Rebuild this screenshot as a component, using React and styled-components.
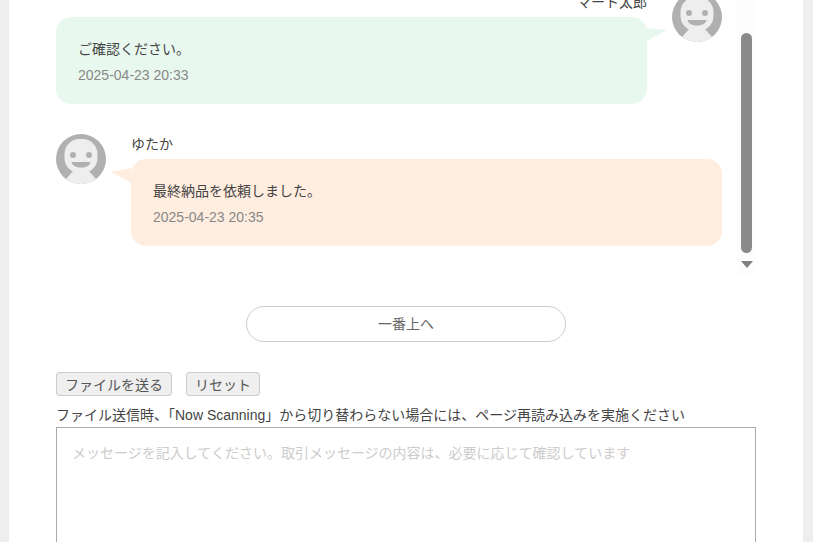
import React from "react";
import styled, { createGlobalStyle } from "styled-components";

const GlobalStyle = createGlobalStyle`
  html, body {
    margin: 0;
    height: 542px;
    overflow: hidden;
    background: #eeeeee;
  }
  * {
    box-sizing: border-box;
  }
`;

function Avatar() {
  return (
    <AvatarIcon viewBox="0 0 50 50">
      <circle cx="25" cy="25" r="25" fill="#b0b0b0" />
      <path d="M18 36 L10 45 A25 25 0 0 0 40 45 L32 36 Z" fill="#eeeeee" />
      <rect x="8.5" y="5" width="33" height="34" rx="15" fill="#eeeeee" />
      <circle cx="17" cy="21" r="3" fill="#b0b0b0" />
      <circle cx="33" cy="21" r="3" fill="#b0b0b0" />
      <path d="M15.5 28 H34.5 C33.5 32 30 33.5 25 33.5 C20 33.5 16.5 32 15.5 28 Z" fill="#b0b0b0" />
    </AvatarIcon>
  );
}

function Message({ name, text, time, mine }) {
  return (
    <MessageRow $mine={mine}>
      <Avatar />
      <MessageBody>
        <SenderName $mine={mine}>{name}</SenderName>
        <Bubble $mine={mine}>
          <MessageText>{text}</MessageText>
          <MessageTime>{time}</MessageTime>
        </Bubble>
      </MessageBody>
    </MessageRow>
  );
}

export default function App() {
  return (
    <>
      <GlobalStyle />
      <Page>
        <ChatFrame>
          <ChatList>
            <Message mine name="マート太郎" text="ご確認ください。" time="2025-04-23 20:33" />
            <Message name="ゆたか" text="最終納品を依頼しました。" time="2025-04-23 20:35" />
          </ChatList>
          <ScrollTrack>
            <ScrollThumb />
            <ScrollArrow />
          </ScrollTrack>
        </ChatFrame>
        <TopRow>
          <TopButton type="button">一番上へ</TopButton>
        </TopRow>
        <FileRow>
          <FileButton type="button">ファイルを送る</FileButton>
          <FileButton type="button">リセット</FileButton>
        </FileRow>
        <Notice>ファイル送信時、「Now Scanning」から切り替わらない場合には、ページ再読み込みを実施ください</Notice>
        <MessageInput placeholder="メッセージを記入してください。取引メッセージの内容は、必要に応じて確認しています" />
      </Page>
    </>
  );
}

const Page = styled.div`
  width: 794px;
  height: 542px;
  margin-left: 9px;
  padding: 0 47px;
  background: #ffffff;
  overflow: hidden;
  color: #444444;
  font-family: "Liberation Sans", "Noto Sans CJK JP", sans-serif;
  font-size: 14px;
`;

const ChatFrame = styled.div`
  display: flex;
  width: 700px;
  height: 275px;
`;

const ChatList = styled.div`
  flex: 1;
  margin-top: -8px;
  padding-right: 15px;
  display: flex;
  flex-direction: column;
  gap: 30px;
`;

const MessageRow = styled.div`
  display: flex;
  flex-direction: ${(p) => (p.$mine ? "row-reverse" : "row")};
  gap: 25px;
`;

const AvatarIcon = styled.svg`
  width: 50px;
  height: 50px;
  flex: none;
`;

const MessageBody = styled.div`
  flex: 1;
`;

const SenderName = styled.div`
  height: 25px;
  line-height: 20px;
  text-align: ${(p) => (p.$mine ? "right" : "left")};
`;

const Bubble = styled.div`
  position: relative;
  height: 87px;
  padding: 22px 22px 0;
  border-radius: 15px;
  background: ${(p) => (p.$mine ? "#e8f8ee" : "#ffeddf")};

  &::before {
    content: "";
    position: absolute;
    width: 20px;
    background: inherit;
    ${(p) =>
      p.$mine
        ? `
      top: 11px;
      left: 100%;
      height: 13px;
      clip-path: polygon(0 0, 100% 15%, 0 100%);
    `
        : `
      top: 9px;
      right: 100%;
      height: 15px;
      clip-path: polygon(100% 0, 0 27%, 100% 100%);
    `}
  }
`;

const MessageText = styled.div`
  line-height: 20px;
`;

const MessageTime = styled.div`
  margin-top: 6px;
  line-height: 20px;
  color: #888888;
`;

const ScrollTrack = styled.div`
  width: 19px;
  padding-top: 33px;
  background: #fdfdfd;
  display: flex;
  flex-direction: column;
  align-items: center;
`;

const ScrollThumb = styled.div`
  width: 11px;
  height: 220px;
  border-radius: 6px;
  background: #8a8a8a;
`;

const ScrollArrow = styled.div`
  margin-top: 8px;
  border-style: solid;
  border-width: 7px 6.5px 0;
  border-color: #808080 transparent transparent;
`;

const TopRow = styled.div`
  display: flex;
  justify-content: center;
  margin-top: 31px;
`;

const TopButton = styled.button`
  width: 320px;
  height: 36px;
  padding: 0 0 2px;
  border: 1px solid #cccccc;
  border-radius: 18px;
  background: #ffffff;
  color: #666666;
  font: inherit;
`;

const FileRow = styled.div`
  display: flex;
  gap: 14px;
  margin-top: 30px;
`;

const FileButton = styled.button`
  height: 24px;
  padding: 0 8px 1px;
  border: 1px solid #cccccc;
  border-radius: 3px;
  background: #efefef;
  color: #555555;
  font: inherit;
`;

const Notice = styled.div`
  margin-top: 9px;
  line-height: 20px;
  white-space: nowrap;
`;

const MessageInput = styled.textarea`
  display: block;
  width: 700px;
  height: 200px;
  margin-top: 2px;
  padding: 15px;
  border: 1px solid #aaaaaa;
  border-radius: 0;
  outline: none;
  resize: none;
  font: inherit;
  line-height: 20px;

  &::placeholder {
    color: #cccccc;
    opacity: 1;
  }
`;
